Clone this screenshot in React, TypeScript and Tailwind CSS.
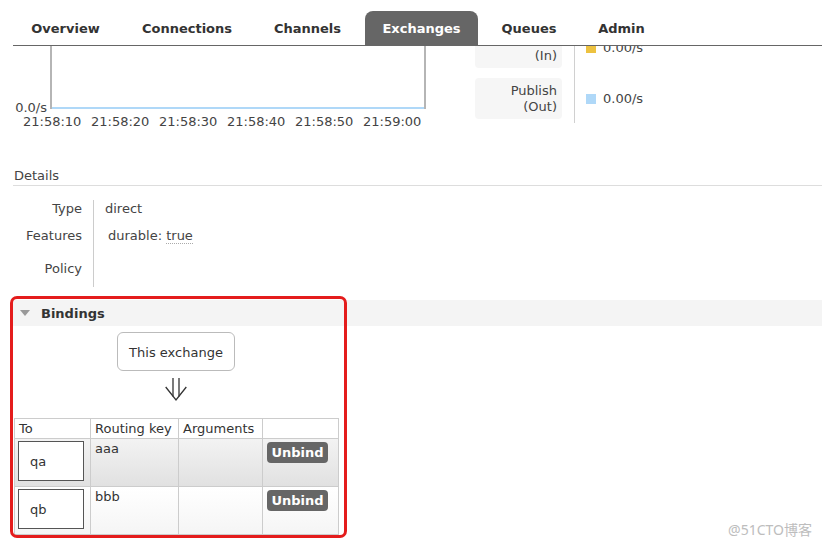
export default function App() {
  const times = ["21:58:10", "21:58:20", "21:58:30", "21:58:40", "21:58:50", "21:59:00"];
  const tabs: { label: string; w: string; active?: boolean }[] = [
    { label: "Overview", w: "w-[105px]" },
    { label: "Connections", w: "w-[126px]" },
    { label: "Channels", w: "w-[103px]" },
    { label: "Exchanges", w: "w-[113px]", active: true },
    { label: "Queues", w: "w-[90px]" },
    { label: "Admin", w: "w-[83px]" },
  ];
  const rows = [
    { q: "qa", key: "aaa", bg: "bg-linear-to-b from-[#f3f3f3] to-[#e1e1e1]" },
    { q: "qb", key: "bbb", bg: "bg-linear-to-b from-[#ffffff] to-[#f5f5f5]" },
  ];
  return (
    <div className="relative w-[822px] h-[546px] overflow-hidden bg-white font-['DejaVu_Sans',Verdana,sans-serif] text-[13px] leading-[16px] text-[#444]">
      {/* top navigation (overlays the scrolled content) */}
      <div className="absolute top-0 left-0 right-0 h-[46px] bg-white z-10 pl-[13px]">
        <div className="h-full flex items-end gap-[6px] border-b border-[#666]">
          {tabs.map((t) => (
            <div
              key={t.label}
              className={`${t.w} h-[34px] flex items-center justify-center pt-[1px] font-bold ${
                t.active ? "bg-[#666] text-white rounded-t-[8px]" : "text-[#333]"
              }`}
            >
              {t.label}
            </div>
          ))}
        </div>
      </div>

      <div className="pl-[13px]">
        {/* chart + legend */}
        <div className="flex h-[130px]">
          <div className="w-[462px]">
            <div className="flex h-[109px] items-end">
              <div className="w-[37px] pr-[3px] text-right leading-[12px] mb-[-5px]">0.0/s</div>
              <div className="w-[376px] h-full border-x-2 border-[#b5b5b5] flex flex-col justify-end">
                <div className="h-[2px] bg-[#afd8f8]" />
              </div>
            </div>
            <div className="flex pl-[10px] mt-[6px] leading-[13px]">
              {times.map((t) => (
                <div key={t} className="w-[68px] shrink-0">
                  {t}
                </div>
              ))}
            </div>
          </div>
          <div className="w-[87px] pt-[27px] flex flex-col gap-[10px]">
            <div className="h-[41px] rounded-[4px] bg-[#f6f6f6] text-right pr-[5px] pt-[21px]">
              <div>(In)</div>
            </div>
            <div className="h-[41px] rounded-[4px] bg-[#f6f6f6] text-right pr-[5px] pt-[5px]">
              <div>Publish</div>
              <div>(Out)</div>
            </div>
          </div>
          <div className="ml-[12px] w-px h-[123px] bg-[#d0d0d0]" />
          <div className="pl-[11px] pt-[27px] flex flex-col gap-[10px]">
            <div className="h-[41px] flex items-center gap-[7px]">
              <div className="w-[10px] h-[10px] bg-[#edc240]" />
              <span>0.00/s</span>
            </div>
            <div className="h-[41px] flex items-center gap-[7px]">
              <div className="w-[10px] h-[10px] bg-[#afd8f8]" />
              <span>0.00/s</span>
            </div>
          </div>
        </div>

        {/* Details */}
        <div className="mt-[37px] pt-[1px] pb-[1px] pl-[1px] border-b border-[#ddd]">Details</div>
        <div className="mt-[14px] flex">
          <div className="w-[80px] pr-[11px] text-right pt-[1px]">
            <div className="h-[27px]">Type</div>
            <div className="h-[33px]">Features</div>
            <div className="h-[26px]">Policy</div>
          </div>
          <div className="border-l border-[#ccc] pl-[11px] h-[87px] pt-[1px]">
            <div className="h-[27px]">direct</div>
            <div className="h-[33px] pl-[3px]">
              durable: <span className="border-b border-dotted border-[#aaa]">true</span>
            </div>
          </div>
        </div>

        {/* Bindings */}
        <div className="mt-[13px] h-[26px] bg-[#f4f4f4] flex items-center pl-[7px] gap-[11px] pt-[1px]">
          <svg width="10" height="7" viewBox="0 0 10 7">
            <path d="M0 0 L10 0 L5 6 Z" fill="#999" />
          </svg>
          <span className="font-bold text-[#333]">Bindings</span>
        </div>
        <div className="mt-[6px] ml-[104px] w-[118px] h-[39px] border border-[#bbb] rounded-[6px] flex items-center justify-center pt-[2px] text-[#333]">
          This exchange
        </div>
        <div className="ml-[152px] mt-[5px] w-[22px] h-[26px]">
          <svg width="22" height="26" viewBox="0 0 22 26" fill="none" stroke="#333" strokeWidth="1.3">
            <path d="M8 2 L8 20.5" />
            <path d="M14 2 L14 20.5" />
            <path d="M0.7 11 L11 24 L21.3 11" />
          </svg>
        </div>

        <div className="mt-[16px] ml-[1px] w-fit grid grid-cols-[76px_88px_84px_76px] border-l border-t border-[#ccc] text-[#333]">
          <div className="h-[20px] border-r border-b border-[#ccc] flex items-center pl-[4px] pt-[1px]">To</div>
          <div className="h-[20px] border-r border-b border-[#ccc] flex items-center pl-[4px] pt-[1px]">Routing key</div>
          <div className="h-[20px] border-r border-b border-[#ccc] flex items-center pl-[4px] pt-[1px]">Arguments</div>
          <div className="h-[20px] border-r border-b border-[#ccc]" />
          {rows.map((r) => (
            <>
              <div key={r.q + "a"} className={`h-[48px] border-r border-b border-[#ccc] ${r.bg} pl-[3px] pt-[2px]`}>
                <div className="w-[66px] h-[40px] bg-white border border-[#555] flex items-center pl-[11px] pt-[1px]">{r.q}</div>
              </div>
              <div key={r.q + "b"} className={`h-[48px] border-r border-b border-[#ccc] ${r.bg} pl-[4px] pt-[2px]`}>
                {r.key}
              </div>
              <div key={r.q + "c"} className={`h-[48px] border-r border-b border-[#ccc] ${r.bg}`} />
              <div key={r.q + "d"} className={`h-[48px] border-r border-b border-[#ccc] ${r.bg} pl-[4px] pt-[3px]`}>
                <div className="w-[61px] h-[21px] rounded-[4px] bg-[#666] text-white font-bold flex items-center justify-center pt-[1px]">
                  Unbind
                </div>
              </div>
            </>
          ))}
        </div>
      </div>

      {/* annotation outline */}
      <div className="absolute left-[10px] top-[296px] w-[337px] h-[242px] border-[3px] border-[#e41c1c] rounded-[7px] pointer-events-none" />

      {/* watermark */}
      <div className="absolute right-[10px] bottom-[7px] text-[14px] leading-[18px] text-[#bdbdbd] font-['Noto_Sans','Noto_Sans_CJK_SC',sans-serif]">
        @51CTO博客
      </div>
    </div>
  );
}
